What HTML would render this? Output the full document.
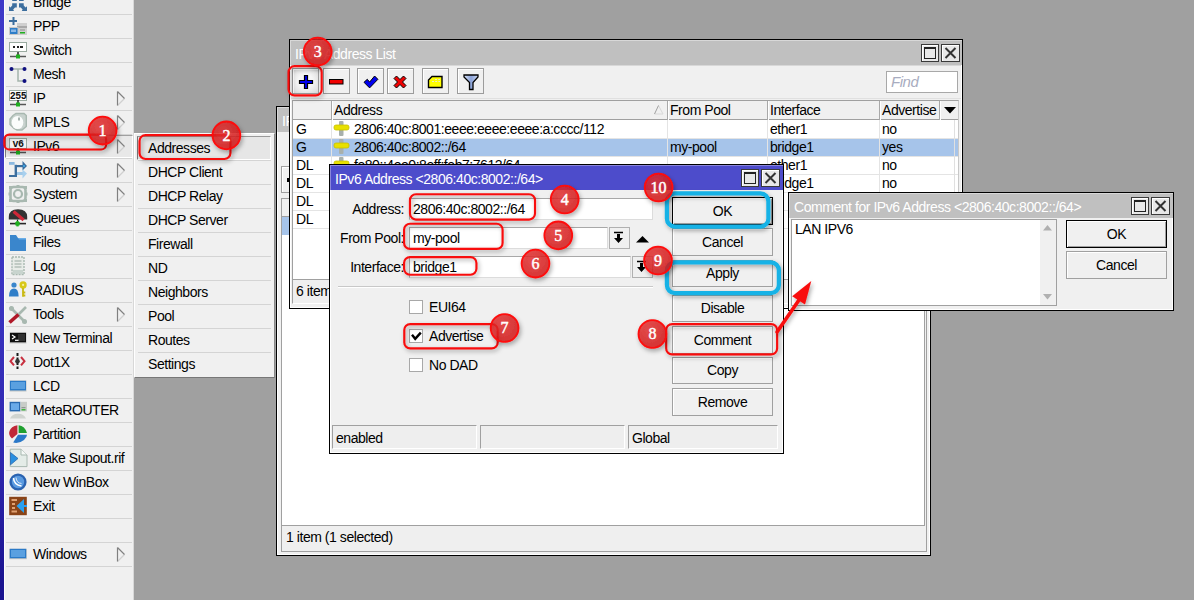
<!DOCTYPE html><html><head><meta charset='utf-8'><style>
*{margin:0;padding:0;box-sizing:border-box}
html,body{width:1194px;height:600px;overflow:hidden;background:#a0a0a0;position:relative;font-family:"Liberation Sans",sans-serif;font-size:14px;letter-spacing:-0.45px;color:#000}
.t{position:absolute;white-space:nowrap}
svg{position:absolute;overflow:visible}
</style></head><body><div style="position:absolute;left:0px;top:0px;width:134px;height:600px;background:#f0f0f0"></div>
<div style="position:absolute;left:0px;top:0px;width:4px;height:600px;background:linear-gradient(#3e39c7 0%,#3a34c0 50%,#2e26ae 77%,#1a1490 97%)"></div>
<div style="position:absolute;left:4px;top:0px;width:1px;height:600px;background:#fcfcfc"></div>
<div style="position:absolute;left:133px;top:0px;width:1px;height:600px;background:#d8d8d8"></div>
<div class="t" style="left:33px;top:-10px;height:24px;line-height:24px;">Bridge</div>
<div style="position:absolute;left:6px;top:14px;width:126px;height:1px;background:#d4d4d4"></div>
<div class="t" style="left:33px;top:14px;height:24px;line-height:24px;">PPP</div>
<div style="position:absolute;left:6px;top:38px;width:126px;height:1px;background:#d4d4d4"></div>
<div class="t" style="left:33px;top:38px;height:24px;line-height:24px;">Switch</div>
<div style="position:absolute;left:6px;top:62px;width:126px;height:1px;background:#d4d4d4"></div>
<div class="t" style="left:33px;top:62px;height:24px;line-height:24px;">Mesh</div>
<div style="position:absolute;left:6px;top:86px;width:126px;height:1px;background:#d4d4d4"></div>
<div class="t" style="left:33px;top:86px;height:24px;line-height:24px;">IP</div>
<div style="position:absolute;left:6px;top:110px;width:126px;height:1px;background:#d4d4d4"></div>
<svg style="left:117px;top:91px" width="8" height="15"><path d="M7.5 7.5 L0.5 14.5" stroke="#d0d0d0" fill="none" stroke-width="1.2"/><path d="M0.5 0.5 L0.5 14.5 M0.5 0.5 L7.5 7.5" stroke="#808080" fill="none" stroke-width="1.2"/></svg>
<div class="t" style="left:33px;top:110px;height:24px;line-height:24px;">MPLS</div>
<div style="position:absolute;left:6px;top:134px;width:126px;height:1px;background:#d4d4d4"></div>
<svg style="left:117px;top:115px" width="8" height="15"><path d="M7.5 7.5 L0.5 14.5" stroke="#d0d0d0" fill="none" stroke-width="1.2"/><path d="M0.5 0.5 L0.5 14.5 M0.5 0.5 L7.5 7.5" stroke="#808080" fill="none" stroke-width="1.2"/></svg>
<div style="position:absolute;left:5px;top:135px;width:128px;height:23px;background:#e8e8e8;border-left:1px solid #808080;border-top:1px solid #a0a0a0;border-bottom:1px solid #fff;border-right:1px solid #fff"></div>
<div class="t" style="left:33px;top:134px;height:24px;line-height:24px;">IPv6</div>
<div style="position:absolute;left:6px;top:158px;width:126px;height:1px;background:#d4d4d4"></div>
<svg style="left:117px;top:139px" width="8" height="15"><path d="M7.5 7.5 L0.5 14.5" stroke="#d0d0d0" fill="none" stroke-width="1.2"/><path d="M0.5 0.5 L0.5 14.5 M0.5 0.5 L7.5 7.5" stroke="#808080" fill="none" stroke-width="1.2"/></svg>
<div class="t" style="left:33px;top:158px;height:24px;line-height:24px;">Routing</div>
<div style="position:absolute;left:6px;top:182px;width:126px;height:1px;background:#d4d4d4"></div>
<svg style="left:117px;top:163px" width="8" height="15"><path d="M7.5 7.5 L0.5 14.5" stroke="#d0d0d0" fill="none" stroke-width="1.2"/><path d="M0.5 0.5 L0.5 14.5 M0.5 0.5 L7.5 7.5" stroke="#808080" fill="none" stroke-width="1.2"/></svg>
<div class="t" style="left:33px;top:182px;height:24px;line-height:24px;">System</div>
<div style="position:absolute;left:6px;top:206px;width:126px;height:1px;background:#d4d4d4"></div>
<svg style="left:117px;top:187px" width="8" height="15"><path d="M7.5 7.5 L0.5 14.5" stroke="#d0d0d0" fill="none" stroke-width="1.2"/><path d="M0.5 0.5 L0.5 14.5 M0.5 0.5 L7.5 7.5" stroke="#808080" fill="none" stroke-width="1.2"/></svg>
<div class="t" style="left:33px;top:206px;height:24px;line-height:24px;">Queues</div>
<div style="position:absolute;left:6px;top:230px;width:126px;height:1px;background:#d4d4d4"></div>
<div class="t" style="left:33px;top:230px;height:24px;line-height:24px;">Files</div>
<div style="position:absolute;left:6px;top:254px;width:126px;height:1px;background:#d4d4d4"></div>
<div class="t" style="left:33px;top:254px;height:24px;line-height:24px;">Log</div>
<div style="position:absolute;left:6px;top:278px;width:126px;height:1px;background:#d4d4d4"></div>
<div class="t" style="left:33px;top:278px;height:24px;line-height:24px;">RADIUS</div>
<div style="position:absolute;left:6px;top:302px;width:126px;height:1px;background:#d4d4d4"></div>
<div class="t" style="left:33px;top:302px;height:24px;line-height:24px;">Tools</div>
<div style="position:absolute;left:6px;top:326px;width:126px;height:1px;background:#d4d4d4"></div>
<svg style="left:117px;top:307px" width="8" height="15"><path d="M7.5 7.5 L0.5 14.5" stroke="#d0d0d0" fill="none" stroke-width="1.2"/><path d="M0.5 0.5 L0.5 14.5 M0.5 0.5 L7.5 7.5" stroke="#808080" fill="none" stroke-width="1.2"/></svg>
<div class="t" style="left:33px;top:326px;height:24px;line-height:24px;">New Terminal</div>
<div style="position:absolute;left:6px;top:350px;width:126px;height:1px;background:#d4d4d4"></div>
<div class="t" style="left:33px;top:350px;height:24px;line-height:24px;">Dot1X</div>
<div style="position:absolute;left:6px;top:374px;width:126px;height:1px;background:#d4d4d4"></div>
<div class="t" style="left:33px;top:374px;height:24px;line-height:24px;">LCD</div>
<div style="position:absolute;left:6px;top:398px;width:126px;height:1px;background:#d4d4d4"></div>
<div class="t" style="left:33px;top:398px;height:24px;line-height:24px;">MetaROUTER</div>
<div style="position:absolute;left:6px;top:422px;width:126px;height:1px;background:#d4d4d4"></div>
<div class="t" style="left:33px;top:422px;height:24px;line-height:24px;">Partition</div>
<div style="position:absolute;left:6px;top:446px;width:126px;height:1px;background:#d4d4d4"></div>
<div class="t" style="left:33px;top:446px;height:24px;line-height:24px;">Make Supout.rif</div>
<div style="position:absolute;left:6px;top:470px;width:126px;height:1px;background:#d4d4d4"></div>
<div class="t" style="left:33px;top:470px;height:24px;line-height:24px;">New WinBox</div>
<div style="position:absolute;left:6px;top:494px;width:126px;height:1px;background:#d4d4d4"></div>
<div class="t" style="left:33px;top:494px;height:24px;line-height:24px;">Exit</div>
<div style="position:absolute;left:6px;top:518px;width:126px;height:1px;background:#d4d4d4"></div>
<div class="t" style="left:33px;top:518px;height:24px;line-height:24px;"></div>
<div style="position:absolute;left:6px;top:542px;width:126px;height:1px;background:#d4d4d4"></div>
<div class="t" style="left:33px;top:542px;height:24px;line-height:24px;">Windows</div>
<div style="position:absolute;left:6px;top:566px;width:126px;height:1px;background:#d4d4d4"></div>
<svg style="left:117px;top:547px" width="8" height="15"><path d="M7.5 7.5 L0.5 14.5" stroke="#d0d0d0" fill="none" stroke-width="1.2"/><path d="M0.5 0.5 L0.5 14.5 M0.5 0.5 L7.5 7.5" stroke="#808080" fill="none" stroke-width="1.2"/></svg>
<svg style="left:9px;top:-6px" width="18" height="18" viewBox="0 0 18 18"><g fill="#3c6e9e" transform="translate(-9,6)"><rect x="12.2" y="-2" width="4.6" height="3"/><rect x="19" y="-2" width="4.7" height="3"/><path d="M12.2 3.2 H16.8 V7.6 H15 L13.2 9.4 L14 11 H9 V6.2 L10.4 7.4 L12.2 5.6 Z"/><path d="M23.7 3.2 H19 V7.6 H20.8 L22.6 9.4 L21.8 11 H27 V6.2 L25.6 7.4 L23.7 5.6 Z"/></g></svg>
<svg style="left:9px;top:18px" width="18" height="18" viewBox="0 0 18 18"><path d="M0 3 H8 M4.5 -1 V7" stroke="#3c6e9e" stroke-width="2"/><rect x="8" y="5" width="10" height="12" fill="#cfcfcf"/><rect x="8" y="8" width="10" height="2" fill="#a8a8a8"/><rect x="0.5" y="9.5" width="8.5" height="7" fill="#2f7ec8" stroke="#c8c8c8"/><rect x="2" y="11.5" width="5" height="2.5" fill="#8ab8e8"/><rect x="11" y="14" width="5" height="1.5" fill="#20b020"/><rect x="11" y="11.5" width="5" height="1" fill="#909090"/></svg>
<svg style="left:9px;top:42px" width="18" height="18" viewBox="0 0 18 18"><rect x="0.5" y="0.5" width="17" height="9" fill="#fff" stroke="#9aaaa0"/><rect x="4" y="4" width="2" height="2" fill="#222"/><rect x="8" y="4" width="2" height="2" fill="#222"/><rect x="11" y="4" width="3" height="2" fill="#222"/><path d="M9 10 V14" stroke="#202020" stroke-width="1.5"/><path d="M1 14.5 H17" stroke="#303030" stroke-width="1.5" opacity="0.8"/><rect x="7" y="12.5" width="4" height="4" fill="#20b020"/></svg>
<svg style="left:9px;top:66px" width="18" height="18" viewBox="0 0 18 18"><path d="M2 3 H15 M9 3 V15 H15" stroke="#a4b4ac" stroke-width="1.5" fill="none"/><circle cx="2.5" cy="3" r="2" fill="#101080"/><circle cx="15.5" cy="3" r="2" fill="#101080"/><circle cx="15.5" cy="15" r="2" fill="#101080"/></svg>
<svg style="left:9px;top:90px" width="18" height="18" viewBox="0 0 18 18"><rect x="0.5" y="0.5" width="17" height="10" fill="#fff" stroke="#9aaaa0"/><text x="9" y="8.5" text-anchor="middle" font-family="Liberation Mono" font-weight="bold" font-size="10" fill="#111" letter-spacing="-0.5">255</text><path d="M9 10 V14" stroke="#202020" stroke-width="1.5"/><path d="M1 14.5 H17" stroke="#303030" stroke-width="1.5" opacity="0.8"/><rect x="7" y="12.5" width="4" height="4" fill="#20b020"/></svg>
<svg style="left:9px;top:114px" width="18" height="18" viewBox="0 0 18 18"><path d="M7 -0.5 H15 L17.3 1.5 V12.5 L13 16 H8 L5 14.5 L1 10.5 V5 L4 1.5 Z" fill="#c8d2ce" stroke="#a8b8b0" stroke-width="1.4"/><ellipse cx="8.5" cy="8.5" rx="5.8" ry="6.6" fill="#fbfdfc"/><rect x="9" y="3.5" width="2" height="3" fill="#a8b4b0"/></svg>
<svg style="left:9px;top:138px" width="18" height="18" viewBox="0 0 18 18"><rect x="0.5" y="0.5" width="17" height="10" fill="#f4f4f4" stroke="#9aaaa0"/><text x="9" y="9" text-anchor="middle" font-family="Liberation Mono" font-weight="bold" font-size="10" fill="#111" letter-spacing="-0.5">v6</text><path d="M9 10 V14" stroke="#202020" stroke-width="1.5"/><path d="M1 14.5 H17" stroke="#303030" stroke-width="1.5" opacity="0.8"/><rect x="7" y="12.5" width="4" height="4" fill="#20b020"/></svg>
<svg style="left:9px;top:162px" width="18" height="18" viewBox="0 0 18 18"><rect x="0" y="0" width="5.6" height="2.8" fill="#8ab8e0"/><rect x="5.6" y="2.8" width="2.4" height="11" fill="#3c6e9e"/><rect x="0" y="13" width="8" height="2" fill="#3c6e9e"/><rect x="8" y="3" width="6" height="2.2" fill="#3c6e9e"/><path d="M13.5 -1 L18 4 L13.5 8.5 Z" fill="#3c6e9e"/><circle cx="15" cy="4" r="1" fill="#3ab0f0"/><rect x="8" y="10" width="6" height="3" fill="#a0c8e8"/><path d="M13.5 7.5 L18 11.5 L13.5 16.5 Z" fill="#a8d0ee"/></svg>
<svg style="left:9px;top:186px" width="18" height="18" viewBox="0 0 18 18"><g fill="none" stroke="#a8b8b0"><rect x="1.5" y="1" width="15" height="14" rx="3" stroke-width="2.6"/><circle cx="9" cy="8" r="4" stroke-width="2.2"/></g><g fill="#a8b8b0"><rect x="7.5" y="-1" width="3" height="2.5"/><rect x="7.5" y="14.5" width="3" height="2.5"/><rect x="-0.5" y="6.5" width="2.5" height="3"/><rect x="16" y="6.5" width="2.5" height="3"/><rect x="0" y="0" width="3" height="3"/><rect x="15" y="0" width="3" height="3"/><rect x="0" y="13" width="3" height="3"/><rect x="15" y="13" width="3" height="3"/></g></svg>
<svg style="left:9px;top:210px" width="18" height="18" viewBox="0 0 18 18"><path d="M-0.2 9.6 V7 Q-0.2 -0.8 9 -0.8 Q18.2 -0.8 18.2 7 V9.6 Z" fill="#333"/><path d="M4.6 1.6 L14.6 10" stroke="#d02838" stroke-width="3.2"/><path d="M1 13.6 H17" stroke="#282828" stroke-width="1.6"/><path d="M8.5 9.6 V12" stroke="#222" stroke-width="1.2"/><rect x="6.3" y="12" width="4.4" height="3.4" fill="#20b020"/><rect x="7.3" y="11" width="2.4" height="5.4" fill="#20b020"/></svg>
<svg style="left:9px;top:234px" width="18" height="18" viewBox="0 0 18 18"><path d="M1 1 H7 L9 4 H17 V17 H1 Z" fill="#3a86cc"/><path d="M9 4 H17 V5.5 H10 Z" fill="#6aaee8"/></svg>
<svg style="left:9px;top:258px" width="18" height="18" viewBox="0 0 18 18"><path d="M3 -1 H15 V16.6 H3 Z" fill="#e8ece8" stroke="#a8b8b0" stroke-width="1.4" stroke-dasharray="2 1"/><path d="M5.5 3 H12.5 M5.5 6 H12.5 M5.5 9 H12.5" stroke="#98a8a0" stroke-width="1.2"/><rect x="4" y="12" width="10" height="4" fill="#c8d4ce"/></svg>
<svg style="left:9px;top:282px" width="18" height="18" viewBox="0 0 18 18"><circle cx="5" cy="3" r="2.6" fill="#3a86cc"/><path d="M0 14.5 Q0 6.5 5 6.5 Q9.6 6.5 9.6 14.5 Z" fill="#2f7ec8"/><circle cx="14.1" cy="2.9" r="3.6" fill="#d8c818"/><circle cx="14.1" cy="2.9" r="1.1" fill="#f8f0a0"/><path d="M14 6 V14.8 M14 10.5 H16.3 M14 13.5 H16.3" stroke="#c8b810" stroke-width="1.8"/></svg>
<svg style="left:9px;top:306px" width="18" height="18" viewBox="0 0 18 18"><path d="M1 1 L17 17" stroke="#a8b8b0" stroke-width="2.6"/><path d="M17 1 L9 9" stroke="#a8b8b0" stroke-width="2.6"/><circle cx="2.5" cy="2.5" r="2.5" fill="#a8b8b0"/><circle cx="15.5" cy="15.5" r="2.5" fill="#a8b8b0"/><path d="M0.5 16.5 L9.5 8.5" stroke="#b01828" stroke-width="3.6"/></svg>
<svg style="left:9px;top:330px" width="18" height="18" viewBox="0 0 18 18"><rect x="0.5" y="2.5" width="17" height="11" fill="#c8c8c8"/><rect x="1" y="2.8" width="16" height="9.5" fill="#101010"/><rect x="9" y="4" width="7" height="7" fill="#303030"/><path d="M3 5 L6 7 L3 9" stroke="#fff" fill="none" stroke-width="1.2"/><path d="M6 10.3 H9.5" stroke="#fff" stroke-width="1.2"/></svg>
<svg style="left:9px;top:354px" width="18" height="18" viewBox="0 0 18 18"><path d="M8.5 -1 V15" stroke="#1a1a1a" stroke-width="2" stroke-dasharray="3 1.5"/><circle cx="8.5" cy="7.2" r="2.3" fill="#333"/><path d="M5 3 L1.5 7.2 L5 11.4 M12 3 L15.5 7.2 L12 11.4" stroke="#c83040" stroke-width="2" fill="none"/></svg>
<svg style="left:9px;top:378px" width="18" height="18" viewBox="0 0 18 18"><rect x="0.5" y="2.5" width="17" height="11" fill="#c0c4c4"/><rect x="1" y="2.8" width="16" height="9.6" fill="#2a7ac8"/><rect x="2" y="4" width="14" height="7" fill="#5aa0e0"/></svg>
<svg style="left:9px;top:402px" width="18" height="18" viewBox="0 0 18 18"><rect x="0.6" y="-0.2" width="10.8" height="9.6" fill="#2a6ab0"/><rect x="2" y="1.2" width="8" height="6.8" fill="#6aaae8"/><rect x="11.4" y="-0.2" width="6.6" height="9.6" fill="#c8ccc8"/><rect x="12.5" y="5" width="4" height="1.2" fill="#909890"/><rect x="12.5" y="7.2" width="4" height="1.2" fill="#20b020"/><path d="M1 16.6 Q3 11.8 9 11.8 Q15 11.8 17 16.6 Z" fill="#d0d4d0"/></svg>
<svg style="left:9px;top:426px" width="18" height="18" viewBox="0 0 18 18"><path d="M8.4 -0.8 L8.4 8 L3 12.4 Q-1 9 0.5 5 Q2 0.5 8.4 -0.8 Z" fill="#c02838"/><path d="M9.6 -0.8 Q16 0 18 7 L9.6 7 Z" fill="#20a030"/><path d="M4.2 16.6 Q10 18 15 14 Q18 11 18 8.8 L9 8.8 Z" fill="#2a78c8"/></svg>
<svg style="left:9px;top:450px" width="18" height="18" viewBox="0 0 18 18"><path d="M1.2 -0.8 H12 L18 5 V16.6 H1.2 Z" fill="#e4ece8" stroke="#a8b8b0" stroke-width="1"/><path d="M12 -0.8 V5 H18" fill="#f4f8f6" stroke="#a8b8b0" stroke-width="1"/><path d="M1.5 2.5 L9 8.5 L1.5 14.8 Z" fill="#2a90e0" stroke="#2a6ab0" stroke-width="0.8"/></svg>
<svg style="left:9px;top:474px" width="18" height="18" viewBox="0 0 18 18"><circle cx="9" cy="8" r="8.6" fill="#2a62b0"/><circle cx="9" cy="8" r="6.2" fill="#5a9ae0"/><path d="M4.5 4 Q5 11 12.5 12" stroke="#fff" stroke-width="1.6" fill="none"/><path d="M7 3.5 Q7.5 9 12.5 9.5" stroke="#dbe8f8" stroke-width="1" fill="none"/></svg>
<svg style="left:9px;top:498px" width="18" height="18" viewBox="0 0 18 18"><rect x="0.2" y="-1.2" width="17.6" height="18.4" fill="#8a4418"/><path d="M2.5 2 H8 M3 6 H6 M3 10 H6 M2.5 13.5 H8" stroke="#e0a070" stroke-width="1.8"/><path d="M15 1 V15 L7.5 8 Z" fill="#2aa0f0"/><path d="M13 8 H18" stroke="#2aa0f0" stroke-width="2"/></svg>
<svg style="left:9px;top:546px" width="18" height="18" viewBox="0 0 18 18"><rect x="0.2" y="2.8" width="17.6" height="10.4" fill="#c0c4c4"/><rect x="0.8" y="2.8" width="16.4" height="9.4" fill="#2a7ac8"/><rect x="2" y="4" width="14" height="7" fill="#5aa0e0"/></svg>
<div style="position:absolute;left:134px;top:133px;width:141px;height:245px;background:#f0f0f0;border-left:1px solid #fff;border-top:1px solid #fff;border-right:1px solid #888;border-bottom:1px solid #777"></div>
<div style="position:absolute;left:137px;top:136px;width:134px;height:24px;background:#e6e6e6;border-left:1px solid #777;border-top:1px solid #999;border-bottom:1px solid #fff;border-right:1px solid #fff"></div>
<div class="t" style="left:148px;top:136px;height:24px;line-height:24px;">Addresses</div>
<div style="position:absolute;left:138px;top:160px;width:133px;height:1px;background:#d4d4d4"></div>
<div class="t" style="left:148px;top:160px;height:24px;line-height:24px;">DHCP Client</div>
<div style="position:absolute;left:138px;top:184px;width:133px;height:1px;background:#d4d4d4"></div>
<div class="t" style="left:148px;top:184px;height:24px;line-height:24px;">DHCP Relay</div>
<div style="position:absolute;left:138px;top:208px;width:133px;height:1px;background:#d4d4d4"></div>
<div class="t" style="left:148px;top:208px;height:24px;line-height:24px;">DHCP Server</div>
<div style="position:absolute;left:138px;top:232px;width:133px;height:1px;background:#d4d4d4"></div>
<div class="t" style="left:148px;top:232px;height:24px;line-height:24px;">Firewall</div>
<div style="position:absolute;left:138px;top:256px;width:133px;height:1px;background:#d4d4d4"></div>
<div class="t" style="left:148px;top:256px;height:24px;line-height:24px;">ND</div>
<div style="position:absolute;left:138px;top:280px;width:133px;height:1px;background:#d4d4d4"></div>
<div class="t" style="left:148px;top:280px;height:24px;line-height:24px;">Neighbors</div>
<div style="position:absolute;left:138px;top:304px;width:133px;height:1px;background:#d4d4d4"></div>
<div class="t" style="left:148px;top:304px;height:24px;line-height:24px;">Pool</div>
<div style="position:absolute;left:138px;top:328px;width:133px;height:1px;background:#d4d4d4"></div>
<div class="t" style="left:148px;top:328px;height:24px;line-height:24px;">Routes</div>
<div style="position:absolute;left:138px;top:352px;width:133px;height:1px;background:#d4d4d4"></div>
<div class="t" style="left:148px;top:352px;height:24px;line-height:24px;">Settings</div>
<div style="position:absolute;left:276px;top:106px;width:655px;height:450px;background:#f0f0f0;border:1px solid #000"></div>
<div style="position:absolute;left:277px;top:107px;width:653px;height:448px;border-top:1px solid #fff;border-left:1px solid #fff;border-right:1px solid #fff;border-bottom:1px solid #fff"></div>
<div style="position:absolute;left:277px;top:107px;width:653px;height:25px;background:#c0c0c0;border-top:1px solid #d8d8d8;border-left:1px solid #d8d8d8"></div>
<div class="t" style="left:282px;top:109px;height:24px;line-height:24px;color:#fff">IPv6 Address List</div>
<div style="position:absolute;left:281px;top:198px;width:646px;height:354px;background:#efefef;border:1px solid #a0a0a0;border-top:none"></div>
<div style="position:absolute;left:281px;top:198px;width:644px;height:327px;background:#fff;border-left:1px solid #a0a0a0;border-top:1px solid #a0a0a0;border-right:1px solid #a0a0a0"></div>
<div style="position:absolute;left:282px;top:199px;width:642px;height:18px;background:#f0f0f0;border-bottom:1px solid #a0a0a0"></div>
<div style="position:absolute;left:282px;top:217px;width:642px;height:18px;background:#a6c4ea"></div>
<div style="position:absolute;left:281px;top:166px;width:30px;height:27px;background:#f0f0f0;border:1px solid #a0a0a0;box-shadow:inset 1px 1px #fff"></div>
<div style="position:absolute;left:287px;top:178px;width:2px;height:4px;background:#000"></div>
<div style="position:absolute;left:282px;top:525px;width:643px;height:1px;background:#a0a0a0"></div>
<div class="t" style="left:286px;top:525px;height:25px;line-height:25px;">1 item (1 selected)</div>
<div style="position:absolute;left:289px;top:39px;width:674px;height:270px;background:#f0f0f0;border:1px solid #000"></div>
<div style="position:absolute;left:290px;top:40px;width:672px;height:268px;border-top:1px solid #fff;border-left:1px solid #fff;border-right:1px solid #fff;border-bottom:1px solid #fff"></div>
<div style="position:absolute;left:290px;top:40px;width:672px;height:25px;background:#c0c0c0;border-top:1px solid #d8d8d8;border-left:1px solid #d8d8d8"></div>
<div class="t" style="left:295px;top:42px;height:24px;line-height:24px;color:#fff">IPv6 Address List</div>
<div style="position:absolute;left:921px;top:44px;width:18px;height:18px;background:#e8e8e8;border:1px solid #3a3a3a;box-shadow:inset 1px 1px #fff"></div>
<div style="position:absolute;left:924px;top:47px;width:12px;height:12px;border:1px solid #222;border-top:2px solid #222;background:#e8e8e8"></div>
<div style="position:absolute;left:941px;top:44px;width:19px;height:18px;background:#e8e8e8;border:1px solid #3a3a3a;box-shadow:inset 1px 1px #fff"></div>
<svg style="left:941px;top:44px" width="19" height="18"><path d="M4.5 4 L14.5 14 M14.5 4 L4.5 14" stroke="#333" stroke-width="2"/></svg>
<div style="position:absolute;left:291px;top:65px;width:670px;height:1px;background:#d8d8d8"></div>
<div style="position:absolute;left:292px;top:68px;width:27px;height:26px;background:radial-gradient(#f6f6f6 40%,#d8d8d8);border:1px solid #9c9c9c;box-shadow:inset 1px 1px #fff"></div>
<div style="position:absolute;left:323px;top:68px;width:27px;height:26px;background:#f0f0f0;border:1px solid #9c9c9c;box-shadow:inset 1px 1px #fff"></div>
<div style="position:absolute;left:357px;top:68px;width:27px;height:26px;background:#f0f0f0;border:1px solid #9c9c9c;box-shadow:inset 1px 1px #fff"></div>
<div style="position:absolute;left:387px;top:68px;width:27px;height:26px;background:#f0f0f0;border:1px solid #9c9c9c;box-shadow:inset 1px 1px #fff"></div>
<div style="position:absolute;left:422px;top:68px;width:27px;height:26px;background:#f0f0f0;border:1px solid #9c9c9c;box-shadow:inset 1px 1px #fff"></div>
<div style="position:absolute;left:457px;top:68px;width:27px;height:26px;background:#f0f0f0;border:1px solid #9c9c9c;box-shadow:inset 1px 1px #fff"></div>
<svg style="left:299px;top:75px" width="14" height="14"><path d="M5.5 0.5 H8.5 V5.5 H13.5 V8.5 H8.5 V13.5 H5.5 V8.5 H0.5 V5.5 H5.5 Z" fill="#0000f0" stroke="#000" stroke-width="1.2"/></svg>
<svg style="left:329px;top:79px" width="15" height="6"><rect x="0.5" y="0.5" width="13.5" height="4.5" fill="#f00000" stroke="#000"/></svg>
<svg style="left:363px;top:75px" width="16" height="14"><path d="M1 7.3 L4.3 4.3 L6.6 7.1 L11.6 1 L14.9 4.3 L6.6 12.9 Z" fill="#0000f0" stroke="#000" stroke-width="1"/></svg>
<svg style="left:393px;top:75px" width="15" height="15"><path d="M1 3.5 L3.5 1 L7 4.5 L10.5 1 L13 3.5 L9.5 7 L13 10.5 L10.5 13 L7 9.5 L3.5 13 L1 10.5 L4.5 7 Z" fill="#f00000" stroke="#000" stroke-width="1"/></svg>
<svg style="left:427px;top:75px" width="17" height="14"><path d="M5 1.5 H15 V12.5 H1.5 V5 Z" fill="#ffff00" stroke="#000" stroke-width="1.4"/><path d="M8 4.5 H13 M5 6.5 H13" stroke="#e8e8d0" stroke-dasharray="2 1.2"/></svg>
<defs></defs><svg style="left:463px;top:74px" width="16" height="17"><defs><linearGradient id="fg" x1="0" x2="1"><stop offset="0" stop-color="#dce6f8"/><stop offset="0.5" stop-color="#8aa2d8"/><stop offset="1" stop-color="#c8d4f0"/></linearGradient></defs><path d="M1 1 H15 V3 L10 8.5 V15.5 H6.5 V8.5 L1 3 Z" fill="url(#fg)" stroke="#000" stroke-width="1.3"/></svg>
<div style="position:absolute;left:291px;top:98px;width:670px;height:1px;background:#e0e0e0"></div>
<div style="position:absolute;left:886px;top:71px;width:72px;height:22px;background:#fff;border:1px solid #a8a8a8"></div>
<div class="t" style="left:891px;top:71px;height:22px;line-height:22px;color:#a8acc0;font-style:italic;font-size:15px">Find</div>
<div style="position:absolute;left:292px;top:100px;width:667px;height:180px;background:#fff;border-left:1px solid #a0a0a0;border-top:1px solid #a0a0a0;border-right:1px solid #c8c8c8"></div>
<div style="position:absolute;left:293px;top:101px;width:665px;height:19px;background:#f0f0f0;border-bottom:1px solid #a0a0a0"></div>
<div style="position:absolute;left:331px;top:101px;width:1px;height:19px;background:#a8a8a8"></div>
<div style="position:absolute;left:332px;top:101px;width:1px;height:19px;background:#fff"></div>
<div style="position:absolute;left:667px;top:101px;width:1px;height:19px;background:#a8a8a8"></div>
<div style="position:absolute;left:668px;top:101px;width:1px;height:19px;background:#fff"></div>
<div style="position:absolute;left:767px;top:101px;width:1px;height:19px;background:#a8a8a8"></div>
<div style="position:absolute;left:768px;top:101px;width:1px;height:19px;background:#fff"></div>
<div style="position:absolute;left:879px;top:101px;width:1px;height:19px;background:#a8a8a8"></div>
<div style="position:absolute;left:880px;top:101px;width:1px;height:19px;background:#fff"></div>
<div style="position:absolute;left:939px;top:101px;width:1px;height:19px;background:#a8a8a8"></div>
<div style="position:absolute;left:940px;top:101px;width:1px;height:19px;background:#fff"></div>
<div class="t" style="left:334px;top:101px;height:19px;line-height:19px;">Address</div>
<div class="t" style="left:670px;top:101px;height:19px;line-height:19px;">From Pool</div>
<div class="t" style="left:770px;top:101px;height:19px;line-height:19px;">Interface</div>
<div class="t" style="left:882px;top:101px;height:19px;line-height:19px;">Advertise</div>
<svg style="left:944px;top:107px" width="13" height="7"><path d="M0 0 L12 0 L6 6.5 Z" fill="#000"/></svg>
<svg style="left:654px;top:105px" width="11" height="10"><path d="M4.5 0.5 L9 9 L0.5 9" stroke="#d8d8d8" fill="none"/><path d="M4.5 0.5 L0.5 9" stroke="#a0a0a0" fill="none"/></svg>
<div style="position:absolute;left:293px;top:138px;width:665px;height:1px;background:#e4e4e4"></div>
<svg style="left:333px;top:121px" width="17" height="16"><rect x="6" y="0" width="4.5" height="15" rx="1" fill="#a8b0ac"/><rect x="1" y="4" width="15" height="5" rx="2" fill="#e8e000" stroke="#c8c000" stroke-width="0.8"/></svg>
<div class="t" style="left:296px;top:120px;height:18px;line-height:18px;">G</div>
<div class="t" style="left:354px;top:120px;height:18px;line-height:18px;">2806:40c:8001:eeee:eeee:eeee:a:cccc/112</div>
<div class="t" style="left:670px;top:120px;height:18px;line-height:18px;"></div>
<div class="t" style="left:770px;top:120px;height:18px;line-height:18px;">ether1</div>
<div class="t" style="left:882px;top:120px;height:18px;line-height:18px;">no</div>
<div style="position:absolute;left:331px;top:120px;width:1px;height:18px;background:#e4e4e4"></div>
<div style="position:absolute;left:667px;top:120px;width:1px;height:18px;background:#e4e4e4"></div>
<div style="position:absolute;left:767px;top:120px;width:1px;height:18px;background:#e4e4e4"></div>
<div style="position:absolute;left:879px;top:120px;width:1px;height:18px;background:#e4e4e4"></div>
<div style="position:absolute;left:293px;top:139px;width:665px;height:17px;background:#a6c4ea"></div>
<div style="position:absolute;left:293px;top:156px;width:665px;height:1px;background:#e4e4e4"></div>
<svg style="left:333px;top:139px" width="17" height="16"><rect x="6" y="0" width="4.5" height="15" rx="1" fill="#a8b0ac"/><rect x="1" y="4" width="15" height="5" rx="2" fill="#e8e000" stroke="#c8c000" stroke-width="0.8"/></svg>
<div class="t" style="left:296px;top:138px;height:18px;line-height:18px;">G</div>
<div class="t" style="left:354px;top:138px;height:18px;line-height:18px;">2806:40c:8002::/64</div>
<div class="t" style="left:670px;top:138px;height:18px;line-height:18px;">my-pool</div>
<div class="t" style="left:770px;top:138px;height:18px;line-height:18px;">bridge1</div>
<div class="t" style="left:882px;top:138px;height:18px;line-height:18px;">yes</div>
<div style="position:absolute;left:331px;top:138px;width:1px;height:18px;background:#e4e4e4"></div>
<div style="position:absolute;left:667px;top:138px;width:1px;height:18px;background:#e4e4e4"></div>
<div style="position:absolute;left:767px;top:138px;width:1px;height:18px;background:#e4e4e4"></div>
<div style="position:absolute;left:879px;top:138px;width:1px;height:18px;background:#e4e4e4"></div>
<div style="position:absolute;left:293px;top:174px;width:665px;height:1px;background:#e4e4e4"></div>
<svg style="left:333px;top:157px" width="17" height="16"><rect x="6" y="0" width="4.5" height="15" rx="1" fill="#a8b0ac"/><rect x="1" y="4" width="15" height="5" rx="2" fill="#e8e000" stroke="#c8c000" stroke-width="0.8"/></svg>
<div class="t" style="left:296px;top:156px;height:18px;line-height:18px;">DL</div>
<div class="t" style="left:354px;top:156px;height:18px;line-height:18px;">fe80::4ee0:8eff:feb7:7612/64</div>
<div class="t" style="left:670px;top:156px;height:18px;line-height:18px;"></div>
<div class="t" style="left:770px;top:156px;height:18px;line-height:18px;">ether1</div>
<div class="t" style="left:882px;top:156px;height:18px;line-height:18px;">no</div>
<div style="position:absolute;left:331px;top:156px;width:1px;height:18px;background:#e4e4e4"></div>
<div style="position:absolute;left:667px;top:156px;width:1px;height:18px;background:#e4e4e4"></div>
<div style="position:absolute;left:767px;top:156px;width:1px;height:18px;background:#e4e4e4"></div>
<div style="position:absolute;left:879px;top:156px;width:1px;height:18px;background:#e4e4e4"></div>
<div style="position:absolute;left:293px;top:192px;width:665px;height:1px;background:#e4e4e4"></div>
<svg style="left:333px;top:175px" width="17" height="16"><rect x="6" y="0" width="4.5" height="15" rx="1" fill="#a8b0ac"/><rect x="1" y="4" width="15" height="5" rx="2" fill="#e8e000" stroke="#c8c000" stroke-width="0.8"/></svg>
<div class="t" style="left:296px;top:174px;height:18px;line-height:18px;">DL</div>
<div class="t" style="left:354px;top:174px;height:18px;line-height:18px;"></div>
<div class="t" style="left:670px;top:174px;height:18px;line-height:18px;"></div>
<div class="t" style="left:770px;top:174px;height:18px;line-height:18px;">bridge1</div>
<div class="t" style="left:882px;top:174px;height:18px;line-height:18px;">no</div>
<div style="position:absolute;left:331px;top:174px;width:1px;height:18px;background:#e4e4e4"></div>
<div style="position:absolute;left:667px;top:174px;width:1px;height:18px;background:#e4e4e4"></div>
<div style="position:absolute;left:767px;top:174px;width:1px;height:18px;background:#e4e4e4"></div>
<div style="position:absolute;left:879px;top:174px;width:1px;height:18px;background:#e4e4e4"></div>
<div style="position:absolute;left:293px;top:210px;width:665px;height:1px;background:#e4e4e4"></div>
<svg style="left:333px;top:193px" width="17" height="16"><rect x="6" y="0" width="4.5" height="15" rx="1" fill="#a8b0ac"/><rect x="1" y="4" width="15" height="5" rx="2" fill="#e8e000" stroke="#c8c000" stroke-width="0.8"/></svg>
<div class="t" style="left:296px;top:192px;height:18px;line-height:18px;">DL</div>
<div class="t" style="left:354px;top:192px;height:18px;line-height:18px;"></div>
<div class="t" style="left:670px;top:192px;height:18px;line-height:18px;"></div>
<div class="t" style="left:770px;top:192px;height:18px;line-height:18px;"></div>
<div class="t" style="left:882px;top:192px;height:18px;line-height:18px;"></div>
<div style="position:absolute;left:331px;top:192px;width:1px;height:18px;background:#e4e4e4"></div>
<div style="position:absolute;left:667px;top:192px;width:1px;height:18px;background:#e4e4e4"></div>
<div style="position:absolute;left:767px;top:192px;width:1px;height:18px;background:#e4e4e4"></div>
<div style="position:absolute;left:879px;top:192px;width:1px;height:18px;background:#e4e4e4"></div>
<div style="position:absolute;left:293px;top:228px;width:665px;height:1px;background:#e4e4e4"></div>
<svg style="left:333px;top:211px" width="17" height="16"><rect x="6" y="0" width="4.5" height="15" rx="1" fill="#a8b0ac"/><rect x="1" y="4" width="15" height="5" rx="2" fill="#e8e000" stroke="#c8c000" stroke-width="0.8"/></svg>
<div class="t" style="left:296px;top:210px;height:18px;line-height:18px;">DL</div>
<div class="t" style="left:354px;top:210px;height:18px;line-height:18px;"></div>
<div class="t" style="left:670px;top:210px;height:18px;line-height:18px;"></div>
<div class="t" style="left:770px;top:210px;height:18px;line-height:18px;"></div>
<div class="t" style="left:882px;top:210px;height:18px;line-height:18px;"></div>
<div style="position:absolute;left:331px;top:210px;width:1px;height:18px;background:#e4e4e4"></div>
<div style="position:absolute;left:667px;top:210px;width:1px;height:18px;background:#e4e4e4"></div>
<div style="position:absolute;left:767px;top:210px;width:1px;height:18px;background:#e4e4e4"></div>
<div style="position:absolute;left:879px;top:210px;width:1px;height:18px;background:#e4e4e4"></div>
<div style="position:absolute;left:954px;top:120px;width:1px;height:159px;background:#e0e0e0"></div>
<div style="position:absolute;left:292px;top:279px;width:669px;height:25px;background:#efefef;border-top:1px solid #a0a0a0;border-left:1px solid #a0a0a0;border-bottom:1px solid #fff"></div>
<div class="t" style="left:296px;top:279px;height:24px;line-height:24px;">6 items</div>
<div style="position:absolute;left:329px;top:164px;width:455px;height:290px;background:#f0f0f0;border:1px solid #000"></div>
<div style="position:absolute;left:330px;top:165px;width:453px;height:288px;border-top:1px solid #fff;border-left:1px solid #fff;border-right:1px solid #fff;border-bottom:1px solid #fff"></div>
<div style="position:absolute;left:330px;top:165px;width:453px;height:25px;background:#4d4ccb;border-top:1px solid #8a86da;border-left:1px solid #8a86da"></div>
<div class="t" style="left:335px;top:167px;height:24px;line-height:24px;color:#fff">IPv6 Address &lt;2806:40c:8002::/64&gt;</div>
<div style="position:absolute;left:741px;top:169px;width:18px;height:18px;background:#e8e8e8;border:1px solid #3a3a3a;box-shadow:inset 1px 1px #fff"></div>
<div style="position:absolute;left:744px;top:172px;width:12px;height:12px;border:1px solid #222;border-top:2px solid #222;background:#e8e8e8"></div>
<div style="position:absolute;left:761px;top:169px;width:19px;height:18px;background:#e8e8e8;border:1px solid #3a3a3a;box-shadow:inset 1px 1px #fff"></div>
<svg style="left:761px;top:169px" width="19" height="18"><path d="M4.5 4 L14.5 14 M14.5 4 L4.5 14" stroke="#333" stroke-width="2"/></svg>
<div class="t" style="left:254px;top:198px;height:22px;line-height:22px;width:150px;text-align:right">Address:</div>
<div style="position:absolute;left:409px;top:198px;width:244px;height:22px;background:#fff;border:1px solid #a8a8a8;border-right-color:#dcdcdc;border-bottom-color:#dcdcdc"></div>
<div class="t" style="left:413px;top:198px;height:22px;line-height:22px;">2806:40c:8002::/64</div>
<div class="t" style="left:254px;top:227px;height:22px;line-height:22px;width:150px;text-align:right">From Pool:</div>
<div style="position:absolute;left:409px;top:227px;width:199px;height:22px;background:#fff;border:1px solid #a8a8a8;border-right-color:#dcdcdc;border-bottom-color:#dcdcdc"></div>
<div class="t" style="left:413px;top:227px;height:22px;line-height:22px;">my-pool</div>
<div style="position:absolute;left:609px;top:227px;width:21px;height:22px;background:#f0f0f0;border:1px solid #b0b0b0"></div>
<svg style="left:613px;top:232px" width="12" height="12"><path d="M1 0.5 H10" stroke="#000" stroke-width="1.5"/><path d="M4 2 H7 V6 H10 L5.5 11 L1 6 H4 Z" fill="#000"/></svg>
<svg style="left:636px;top:236px" width="14" height="7"><path d="M0 6.5 L13 6.5 L6.5 0 Z" fill="#000"/></svg>
<div class="t" style="left:254px;top:256px;height:22px;line-height:22px;width:150px;text-align:right">Interface:</div>
<div style="position:absolute;left:409px;top:256px;width:222px;height:22px;background:#fff;border:1px solid #a8a8a8;border-right-color:#dcdcdc;border-bottom-color:#dcdcdc"></div>
<div class="t" style="left:413px;top:256px;height:22px;line-height:22px;">bridge1</div>
<div style="position:absolute;left:632px;top:256px;width:21px;height:22px;background:#f0f0f0;border:1px solid #b0b0b0"></div>
<svg style="left:636px;top:261px" width="12" height="12"><path d="M1 0.5 H10" stroke="#000" stroke-width="1.5"/><path d="M4 2 H7 V6 H10 L5.5 11 L1 6 H4 Z" fill="#000"/></svg>
<div style="position:absolute;left:338px;top:286px;width:315px;height:1px;background:#c8c8c8"></div>
<div style="position:absolute;left:338px;top:287px;width:315px;height:1px;background:#fff"></div>
<div style="position:absolute;left:409px;top:300px;width:14px;height:14px;background:#fff;border:1px solid #a8a8a8"></div>
<div class="t" style="left:429px;top:297px;height:20px;line-height:20px;">EUI64</div>
<div style="position:absolute;left:409px;top:329px;width:14px;height:14px;background:#fff;border:1px solid #a8a8a8"></div>
<svg style="left:409px;top:329px" width="14" height="14"><path d="M3 5.8 L6.2 9.8 L11.8 3.6" stroke="#000" stroke-width="2.4" fill="none"/></svg>
<div class="t" style="left:429px;top:326px;height:20px;line-height:20px;">Advertise</div>
<div style="position:absolute;left:409px;top:358px;width:14px;height:14px;background:#fff;border:1px solid #a8a8a8"></div>
<div class="t" style="left:429px;top:355px;height:20px;line-height:20px;">No DAD</div>
<div style="position:absolute;left:332px;top:425px;width:145px;height:24px;background:#eeeeee;border-left:1px solid #a0a0a0;border-top:1px solid #a0a0a0;border-bottom:1px solid #fff;border-right:1px solid #fff"></div>
<div class="t" style="left:336px;top:426px;height:24px;line-height:24px;">enabled</div>
<div style="position:absolute;left:480px;top:425px;width:145px;height:24px;background:#eeeeee;border-left:1px solid #a0a0a0;border-top:1px solid #a0a0a0;border-bottom:1px solid #fff;border-right:1px solid #fff"></div>
<div class="t" style="left:484px;top:426px;height:24px;line-height:24px;"></div>
<div style="position:absolute;left:628px;top:425px;width:150px;height:24px;background:#eeeeee;border-left:1px solid #a0a0a0;border-top:1px solid #a0a0a0;border-bottom:1px solid #fff;border-right:1px solid #fff"></div>
<div class="t" style="left:632px;top:426px;height:24px;line-height:24px;">Global</div>
<div style="position:absolute;left:672px;top:197px;width:101px;height:28px;background:#f0f0f0;border:1px solid #000;box-shadow:inset 1px 1px #fff, inset -1px -1px #a0a0a0"></div>
<div class="t" style="left:672px;top:197px;height:28px;line-height:28px;width:101px;text-align:center">OK</div>
<div style="position:absolute;left:672px;top:228px;width:101px;height:28px;background:#f0f0f0;border:1px solid #a0a0a0;box-shadow:inset 1px 1px #fff"></div>
<div class="t" style="left:672px;top:228px;height:28px;line-height:28px;width:101px;text-align:center">Cancel</div>
<div style="position:absolute;left:672px;top:260px;width:101px;height:27px;background:#f0f0f0;border:1px solid #a0a0a0;box-shadow:inset 1px 1px #fff"></div>
<div class="t" style="left:672px;top:260px;height:27px;line-height:27px;width:101px;text-align:center">Apply</div>
<div style="position:absolute;left:672px;top:295px;width:101px;height:27px;background:#f0f0f0;border:1px solid #a0a0a0;box-shadow:inset 1px 1px #fff"></div>
<div class="t" style="left:672px;top:295px;height:27px;line-height:27px;width:101px;text-align:center">Disable</div>
<div style="position:absolute;left:672px;top:326px;width:101px;height:28px;background:#f0f0f0;border:1px solid #a0a0a0;box-shadow:inset 1px 1px #fff"></div>
<div class="t" style="left:672px;top:326px;height:28px;line-height:28px;width:101px;text-align:center">Comment</div>
<div style="position:absolute;left:672px;top:357px;width:101px;height:27px;background:#f0f0f0;border:1px solid #a0a0a0;box-shadow:inset 1px 1px #fff"></div>
<div class="t" style="left:672px;top:357px;height:27px;line-height:27px;width:101px;text-align:center">Copy</div>
<div style="position:absolute;left:672px;top:388px;width:101px;height:28px;background:#f0f0f0;border:1px solid #a0a0a0;box-shadow:inset 1px 1px #fff"></div>
<div class="t" style="left:672px;top:388px;height:28px;line-height:28px;width:101px;text-align:center">Remove</div>
<div style="position:absolute;left:788px;top:192px;width:386px;height:119px;background:#f0f0f0;border:1px solid #000"></div>
<div style="position:absolute;left:789px;top:193px;width:384px;height:117px;border-top:1px solid #fff;border-left:1px solid #fff;border-right:1px solid #fff;border-bottom:1px solid #fff"></div>
<div style="position:absolute;left:789px;top:193px;width:384px;height:25px;background:#c0c0c0;border-top:1px solid #d8d8d8;border-left:1px solid #d8d8d8"></div>
<div class="t" style="left:794px;top:195px;height:24px;line-height:24px;color:#fff">Comment for IPv6 Address &lt;2806:40c:8002::/64&gt;</div>
<div style="position:absolute;left:1131px;top:197px;width:18px;height:18px;background:#e8e8e8;border:1px solid #3a3a3a;box-shadow:inset 1px 1px #fff"></div>
<div style="position:absolute;left:1134px;top:200px;width:12px;height:12px;border:1px solid #222;border-top:2px solid #222;background:#e8e8e8"></div>
<div style="position:absolute;left:1151px;top:197px;width:19px;height:18px;background:#e8e8e8;border:1px solid #3a3a3a;box-shadow:inset 1px 1px #fff"></div>
<svg style="left:1151px;top:197px" width="19" height="18"><path d="M4.5 4 L14.5 14 M14.5 4 L4.5 14" stroke="#333" stroke-width="2"/></svg>
<div style="position:absolute;left:791px;top:219px;width:266px;height:87px;background:#fff;border:1px solid #a0a0a0"></div>
<div style="position:absolute;left:1040px;top:220px;width:16px;height:85px;background:#f0f0f0"></div>
<svg style="left:1043px;top:225px" width="10" height="6"><path d="M0 5.5 L9 5.5 L4.5 0 Z" fill="#b0b0b0"/></svg>
<svg style="left:1043px;top:294px" width="10" height="6"><path d="M0 0 L9 0 L4.5 5.5 Z" fill="#b0b0b0"/></svg>
<div class="t" style="left:795px;top:220px;height:18px;line-height:18px;">LAN IPV6</div>
<div style="position:absolute;left:1066px;top:220px;width:101px;height:28px;background:#f0f0f0;border:1px solid #000;box-shadow:inset 1px 1px #fff, inset -1px -1px #a0a0a0"></div>
<div class="t" style="left:1066px;top:220px;height:28px;line-height:28px;width:101px;text-align:center">OK</div>
<div style="position:absolute;left:1066px;top:251px;width:101px;height:28px;background:#f0f0f0;border:1px solid #a0a0a0;box-shadow:inset 1px 1px #fff"></div>
<div class="t" style="left:1066px;top:251px;height:28px;line-height:28px;width:101px;text-align:center">Cancel</div>
<svg style="left:0;top:0" width="1194" height="600"><defs><filter id="sh" x="-20%" y="-20%" width="140%" height="160%"><feDropShadow dx="1.5" dy="2" stdDeviation="2" flood-color="#000" flood-opacity="0.35"/></filter><filter id="bsh" x="-40%" y="-40%" width="180%" height="180%"><feDropShadow dx="1.5" dy="2.5" stdDeviation="2" flood-color="#000" flood-opacity="0.35"/></filter><radialGradient id="bg" cx="0.4" cy="0.35" r="0.7"><stop offset="0" stop-color="#e83030"/><stop offset="1" stop-color="#d41414"/></radialGradient></defs><rect x="4.33" y="134.57" width="101.80" height="14.95" rx="5" ry="5" fill="none" stroke="#f80c0c" stroke-width="2.15" filter="url(#sh)"/><rect x="139.57" y="135.07" width="90.85" height="23.95" rx="6" ry="6" fill="none" stroke="#f80c0c" stroke-width="2.15" filter="url(#sh)"/><rect x="288.57" y="66.17" width="33.15" height="29.25" rx="6" ry="6" fill="none" stroke="#f80c0c" stroke-width="2.15" filter="url(#sh)"/><rect x="409.97" y="194.27" width="125.05" height="25.35" rx="6" ry="6" fill="none" stroke="#f80c0c" stroke-width="2.15" filter="url(#sh)"/><rect x="404.07" y="223.77" width="98.55" height="25.15" rx="6" ry="6" fill="none" stroke="#f80c0c" stroke-width="2.15" filter="url(#sh)"/><rect x="404.07" y="257.07" width="72.35" height="17.65" rx="6" ry="6" fill="none" stroke="#f80c0c" stroke-width="2.15" filter="url(#sh)"/><rect x="404.27" y="324.07" width="93.45" height="24.35" rx="6" ry="6" fill="none" stroke="#f80c0c" stroke-width="2.15" filter="url(#sh)"/><rect x="666.18" y="324.07" width="110.95" height="30.35" rx="6" ry="6" fill="none" stroke="#f80c0c" stroke-width="2.15" filter="url(#sh)"/><rect x="666.90" y="193.30" width="101.50" height="33.40" rx="8" ry="8" fill="none" stroke="#12b2e6" stroke-width="4.2" filter="url(#sh)"/><rect x="666.90" y="262.30" width="112.00" height="30.80" rx="8" ry="8" fill="none" stroke="#12b2e6" stroke-width="4.2" filter="url(#sh)"/><g filter="url(#sh)"><path d="M777 332 L799 300" stroke="#f80c0c" stroke-width="3.6" stroke-linecap="round"/><path d="M811.3 281 L792.2 296.2 L805 304.4 Z" fill="#f80c0c"/></g><g filter="url(#bsh)"><circle cx="102.6" cy="130.6" r="13.9" fill="url(#bg)" fill-opacity="0.8" stroke="#ff0a0a" stroke-width="1.8"/></g><text x="102.6" y="136.0" text-anchor="middle" font-family="Liberation Serif" font-size="16" letter-spacing="0" fill="#fff" stroke="#fff" stroke-width="0.45">1</text><g filter="url(#bsh)"><circle cx="226.4" cy="135.4" r="13.9" fill="url(#bg)" fill-opacity="0.8" stroke="#ff0a0a" stroke-width="1.8"/></g><text x="226.4" y="140.8" text-anchor="middle" font-family="Liberation Serif" font-size="16" letter-spacing="0" fill="#fff" stroke="#fff" stroke-width="0.45">2</text><g filter="url(#bsh)"><circle cx="317.7" cy="51.6" r="13.9" fill="url(#bg)" fill-opacity="0.8" stroke="#ff0a0a" stroke-width="1.8"/></g><text x="317.7" y="57.0" text-anchor="middle" font-family="Liberation Serif" font-size="16" letter-spacing="0" fill="#fff" stroke="#fff" stroke-width="0.45">3</text><g filter="url(#bsh)"><circle cx="564.7" cy="199.5" r="13.9" fill="url(#bg)" fill-opacity="0.8" stroke="#ff0a0a" stroke-width="1.8"/></g><text x="564.7" y="204.9" text-anchor="middle" font-family="Liberation Serif" font-size="16" letter-spacing="0" fill="#fff" stroke="#fff" stroke-width="0.45">4</text><g filter="url(#bsh)"><circle cx="558.3" cy="235.4" r="13.9" fill="url(#bg)" fill-opacity="0.8" stroke="#ff0a0a" stroke-width="1.8"/></g><text x="558.3" y="240.8" text-anchor="middle" font-family="Liberation Serif" font-size="16" letter-spacing="0" fill="#fff" stroke="#fff" stroke-width="0.45">5</text><g filter="url(#bsh)"><circle cx="535.5" cy="263.6" r="13.9" fill="url(#bg)" fill-opacity="0.8" stroke="#ff0a0a" stroke-width="1.8"/></g><text x="535.5" y="269.0" text-anchor="middle" font-family="Liberation Serif" font-size="16" letter-spacing="0" fill="#fff" stroke="#fff" stroke-width="0.45">6</text><g filter="url(#bsh)"><circle cx="504.6" cy="328" r="13.9" fill="url(#bg)" fill-opacity="0.8" stroke="#ff0a0a" stroke-width="1.8"/></g><text x="504.6" y="333.4" text-anchor="middle" font-family="Liberation Serif" font-size="16" letter-spacing="0" fill="#fff" stroke="#fff" stroke-width="0.45">7</text><g filter="url(#bsh)"><circle cx="652.4" cy="334" r="13.9" fill="url(#bg)" fill-opacity="0.8" stroke="#ff0a0a" stroke-width="1.8"/></g><text x="652.4" y="339.4" text-anchor="middle" font-family="Liberation Serif" font-size="16" letter-spacing="0" fill="#fff" stroke="#fff" stroke-width="0.45">8</text><g filter="url(#bsh)"><circle cx="658" cy="260.5" r="13.9" fill="url(#bg)" fill-opacity="0.8" stroke="#ff0a0a" stroke-width="1.8"/></g><text x="658" y="265.9" text-anchor="middle" font-family="Liberation Serif" font-size="16" letter-spacing="0" fill="#fff" stroke="#fff" stroke-width="0.45">9</text><g filter="url(#bsh)"><circle cx="658.6" cy="187.5" r="13.9" fill="url(#bg)" fill-opacity="0.8" stroke="#ff0a0a" stroke-width="1.8"/></g><text x="658.6" y="192.9" text-anchor="middle" font-family="Liberation Serif" font-size="16" letter-spacing="0" fill="#fff" stroke="#fff" stroke-width="0.45">10</text></svg></body></html>
